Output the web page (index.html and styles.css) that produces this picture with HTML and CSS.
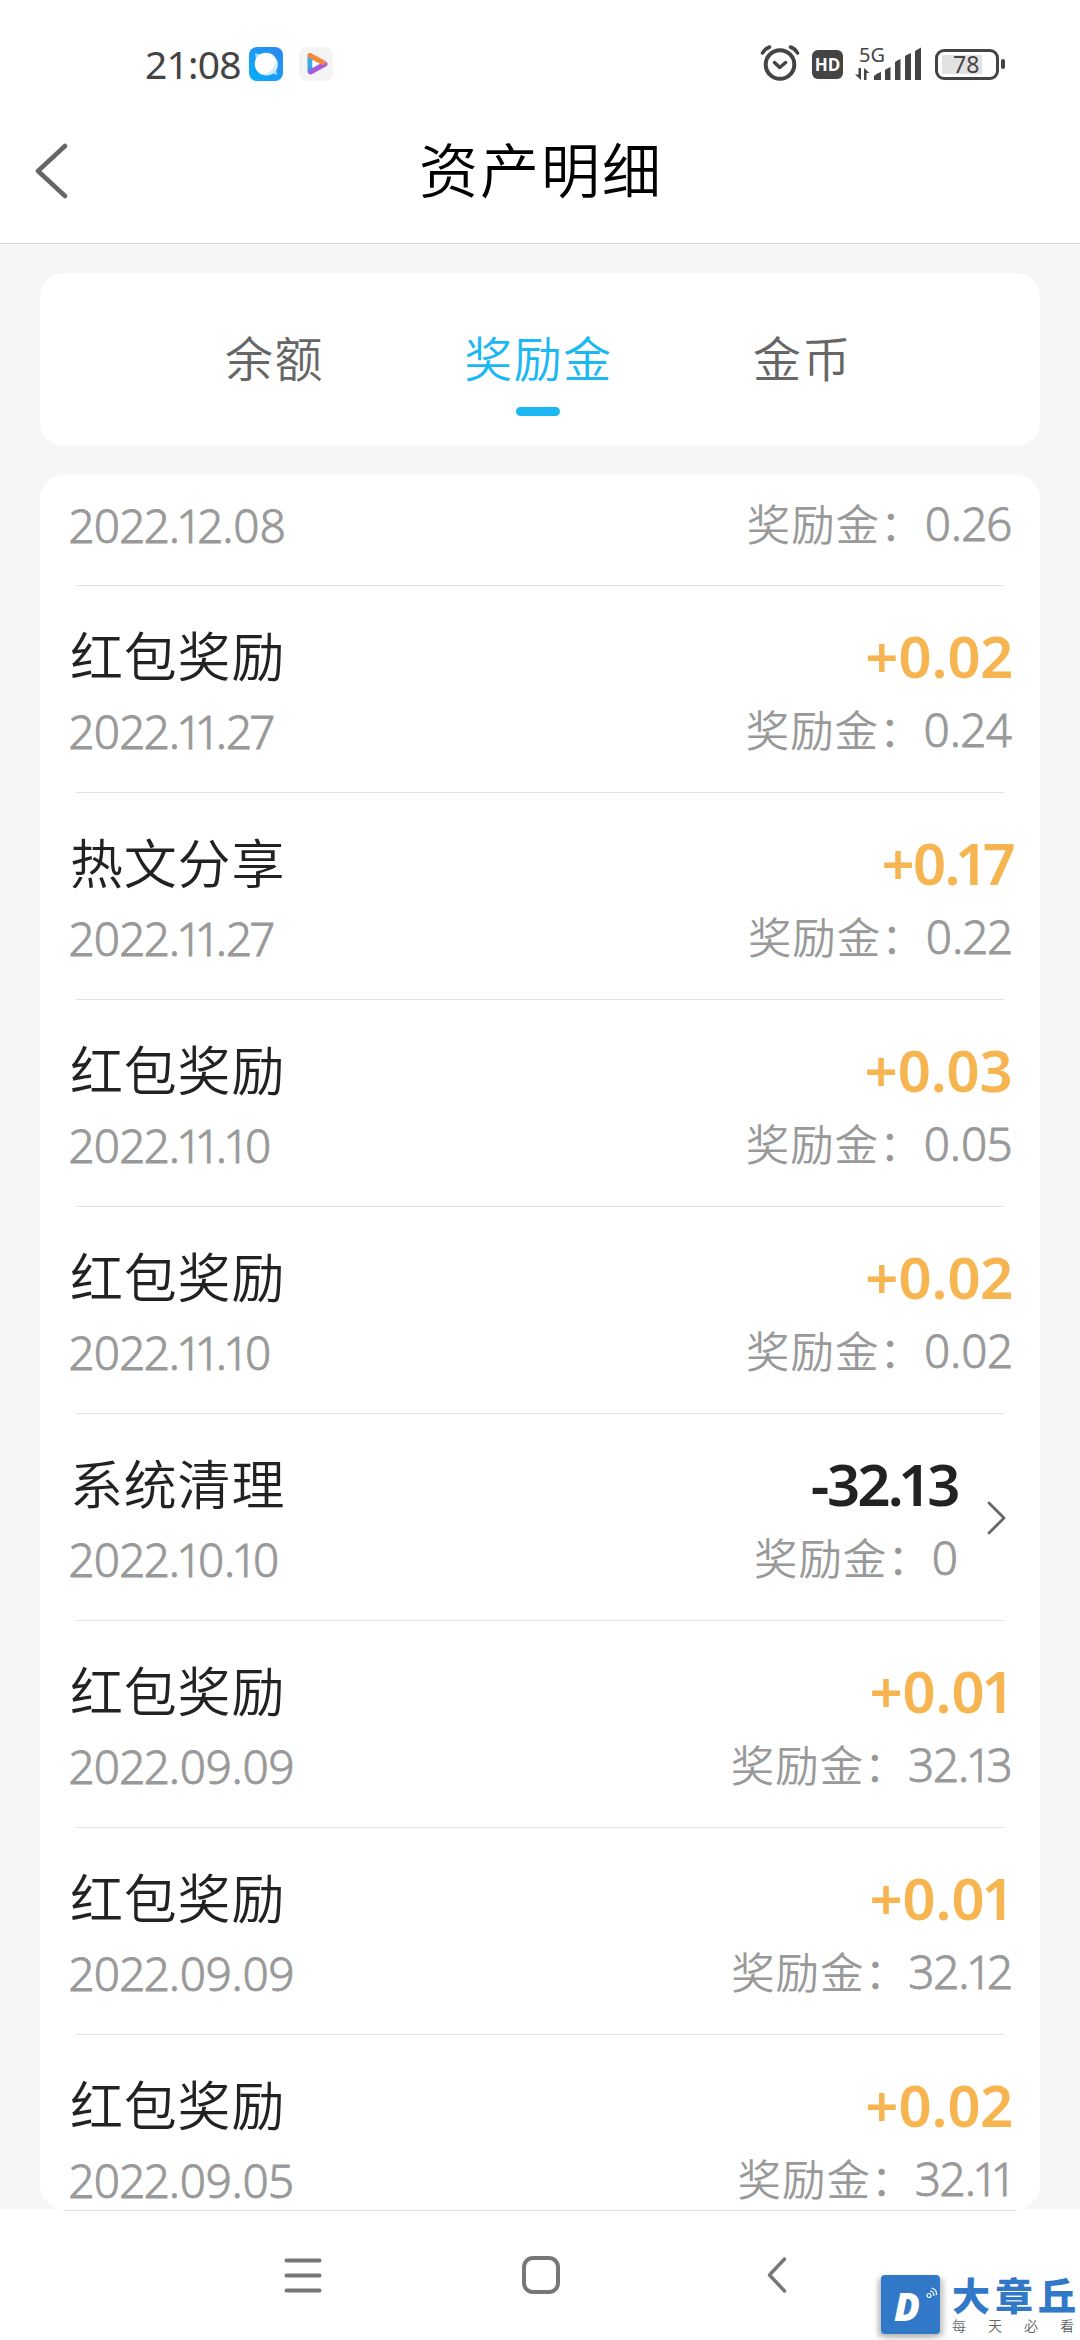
FILE: index.html
```html
<!DOCTYPE html>
<html lang="zh-CN">
<head>
<meta charset="utf-8">
<title>资产明细</title>
<link rel="stylesheet" href="styles.css">
</head>
<body>
<div class="status">
  <span class="clock">21:08</span>
  <svg class="app-a" width="34" height="34" viewBox="0 0 34 34"><defs><linearGradient id="ga" x1="1" y1="0" x2="0" y2="1"><stop offset="0" stop-color="#2f86f0"/><stop offset="1" stop-color="#06b0fb"/></linearGradient></defs><rect width="34" height="34" rx="8" fill="url(#ga)"/><circle cx="17" cy="17" r="11.3" fill="#fff"/><path d="M6 6l6 2-5 5zM28 28l-6-2 5-5z" fill="#fff" opacity=".6"/><path d="M28 13a11.3 11.3 0 0 1-15 14.500Q24 26 28 13z" fill="#d3ebff"/></svg>
  <svg class="app-b" width="34" height="34" viewBox="0 0 34 34"><rect width="34" height="34" rx="8" fill="#f4f4f5"/><path d="M11 9v15" stroke="#38a9e8" stroke-width="5" stroke-linecap="round"/><path d="M11.500 25L26 17" stroke="#a35be0" stroke-width="5" stroke-linecap="round"/><path d="M11 8.500L24 15.500" stroke="#f5863a" stroke-width="5" stroke-linecap="round"/><path d="M13.500 13.500v7l6-3.500z" fill="#fff"/></svg>
  <div class="indicators">
    <svg class="alarm" width="40" height="38" viewBox="0 0 40 38" fill="none" stroke="#444" stroke-linecap="round"><circle cx="20" cy="20.500" r="14.300" stroke-width="4"/><path d="M14.500 18.500l5.200 5 6-5" stroke-width="3.500" stroke-linejoin="round"/><path d="M2.500 9Q5 4.500 9.500 3M30.500 3Q35 4.500 37.500 9" stroke-width="3.600"/></svg>
    <span class="hd">HD</span>
    <div class="signal">
      <span class="net">5G</span>
      <svg width="66" height="36" viewBox="0 0 66 36" fill="#444"><path d="M3.500 24h2.500v12L0 30.500h3.500zM9 24l5.500 5H11.500v7H9z"/><path d="M19 32q3-3 7-4v8h-7zM30 26q3-2 5.500-3v13H30zM40 18q3-2 5.500-3v21H40zM50 12q3-2 6-3v27h-6zM60 7q3-2 6-3.500V36h-6z"/></svg>
    </div>
    <div class="battery"><span class="level">78</span></div>
    <i class="battery-tip"></i>
  </div>
</div>

<header class="bar">
  <svg class="back" width="34" height="60" viewBox="0 0 34 60"><path d="M31 5L4 30L31 55" fill="none" stroke="#666" stroke-width="4.500" stroke-linecap="round" stroke-linejoin="round"/></svg>
  <h1>资产明细</h1>
</header>

<main class="page">
  <nav class="tabs">
    <span class="tab">余额</span>
    <span class="tab active">奖励金</span>
    <span class="tab">金币</span>
  </nav>

  <section class="list">
    <div class="row partial">
      <div class="info"><span class="date">2022.12.08</span></div>
      <div class="value"><p class="total">奖励金：<b>0.26</b></p></div>
    </div>
    <div class="row">
      <div class="info"><span class="name">红包奖励</span><span class="date">2022.11.27</span></div>
      <div class="value"><span class="amount">+0.02</span><p class="total">奖励金：<b>0.24</b></p></div>
    </div>
    <div class="row">
      <div class="info"><span class="name">热文分享</span><span class="date">2022.11.27</span></div>
      <div class="value"><span class="amount narrow">+0.17</span><p class="total">奖励金：<b>0.22</b></p></div>
    </div>
    <div class="row">
      <div class="info"><span class="name">红包奖励</span><span class="date">2022.11.10</span></div>
      <div class="value"><span class="amount">+0.03</span><p class="total">奖励金：<b>0.05</b></p></div>
    </div>
    <div class="row">
      <div class="info"><span class="name">红包奖励</span><span class="date">2022.11.10</span></div>
      <div class="value"><span class="amount">+0.02</span><p class="total">奖励金：<b>0.02</b></p></div>
    </div>
    <div class="row">
      <div class="info"><span class="name">系统清理</span><span class="date">2022.10.10</span></div>
      <div class="value"><span class="amount out">-32.13</span><p class="total">奖励金：<b>0</b></p></div>
      <svg class="more" width="20" height="34" viewBox="0 0 20 34"><path d="M2 2L17 17L2 32" fill="none" stroke="#666" stroke-width="2.800" stroke-linecap="round" stroke-linejoin="round"/></svg>
    </div>
    <div class="row">
      <div class="info"><span class="name">红包奖励</span><span class="date">2022.09.09</span></div>
      <div class="value"><span class="amount">+0.01</span><p class="total">奖励金：<b>32.13</b></p></div>
    </div>
    <div class="row">
      <div class="info"><span class="name">红包奖励</span><span class="date">2022.09.09</span></div>
      <div class="value"><span class="amount">+0.01</span><p class="total">奖励金：<b>32.12</b></p></div>
    </div>
    <div class="row">
      <div class="info"><span class="name">红包奖励</span><span class="date">2022.09.05</span></div>
      <div class="value"><span class="amount">+0.02</span><p class="total">奖励金：<b>32.11</b></p></div>
    </div>
  </section>
</main>

<footer class="system-nav">
  <svg width="38" height="38" viewBox="0 0 38 38" stroke="#777" stroke-width="4" stroke-linecap="round"><path d="M2.500 4.500h33M2.500 19.500h33M2.500 34.500h33"/></svg>
  <svg class="home" width="38" height="38" viewBox="0 0 38 38"><rect x="2" y="2" width="34" height="34" rx="9" fill="none" stroke="#777" stroke-width="4"/></svg>
  <svg width="20" height="38" viewBox="0 0 20 38"><path d="M17.500 3L2.500 19L17.500 35" fill="none" stroke="#777" stroke-width="3.500" stroke-linecap="round" stroke-linejoin="round"/></svg>
</footer>

<aside class="brand">
  <div class="brand-mark"><span>D</span><svg width="12" height="12" viewBox="0 0 12 12" fill="none" stroke="#fff" stroke-width="1.200"><circle cx="3" cy="8.500" r="2"/><path d="M4 4q4 0 4 5M5.500 1q5.500 1 5 7"/></svg></div>
  <div class="brand-text"><strong>大章丘</strong><small><span>每</span><span>天</span><span>必</span><span>看</span></small></div>
</aside>
</body>
</html>
```
FILE: styles.css
```css
* { box-sizing: border-box; }
body {
  margin: 0;
  width: 1080px;
  height: 2340px;
  position: relative;
  display: flex;
  flex-direction: column;
  overflow: hidden;
  background: #fff;
  color: #222;
  font-family: "Noto Sans CJK SC", sans-serif;
  font-weight: 350;
}
p, h1 { margin: 0; }
svg { display: block; flex: none; }

.status {
  height: 100px;
  padding: 28px 75px 0 145px;
  display: flex;
  align-items: flex-start;
  color: #444;
}
.clock {
  width: 104px;
  font: 400 39px/72px "Noto Sans", sans-serif;
  letter-spacing: -.8px;
}
.app-a { margin-top: 19px; }
.app-b { margin: 19px 0 0 16px; }
.indicators { margin-left: auto; display: flex; }
.alarm { margin-top: 16px; }
.hd {
  width: 31px;
  height: 29px;
  margin: 22px 0 0 12px;
  border-radius: 6px;
  background: #444;
  color: #fff;
  font: 700 17px/30px "Open Sans", sans-serif;
  text-align: center;
}
.signal { width: 66px; margin: 16px 0 0 12px; display: grid; }
.signal > * { grid-area: 1 / 1; }
.net { margin-left: 4px; font: 400 20px/22px "Noto Sans", sans-serif; }
.battery {
  width: 64px;
  height: 31px;
  margin: 21px 0 0 14px;
  padding: 3px 4px;
  border: 3px solid #444;
  border-radius: 9px;
}
.level {
  display: block;
  width: 40px;
  height: 19px;
  padding-left: 11px;
  background: #e2e2e2;
  font: 400 23px/19px "Noto Sans", sans-serif;
}
.battery-tip { width: 4px; height: 10px; margin: 31px 0 0 2px; border-radius: 2px; background: #444; }

.bar {
  height: 144px;
  display: grid;
  grid-template-columns: 108px 1fr 108px;
  border-bottom: 1px solid #d9d9d9;
}
.back { margin: 41px 0 0 34px; }
h1 {
  padding-left: 2px;
  color: #000;
  font-size: 59px;
  font-weight: 350;
  line-height: 136px;
  letter-spacing: 2px;
  text-align: center;
}

.page {
  height: 1965px;
  padding: 29px 40px 0;
  background: #f6f6f6;
}
.tabs {
  height: 173px;
  padding: 47px 188px 0 185px;
  display: flex;
  justify-content: space-between;
  border-radius: 24px;
  background: #fff;
  color: #666;
  font-size: 48px;
  line-height: 72px;
  letter-spacing: 1.5px;
}
.tab.active { color: #1cb8f4; display: flex; flex-direction: column; align-items: center; }
.tab.active::after {
  content: "";
  width: 44px;
  height: 9px;
  margin-top: 15px;
  border-radius: 4.5px;
  background: #1cb8f4;
}

.list {
  height: 1734px;
  margin-top: 29px;
  overflow: hidden;
  border-radius: 24px;
  background: #fff;
}
.row {
  height: 207px;
  margin: 0 36px;
  padding-top: 34px;
  display: flex;
  justify-content: space-between;
  border-bottom: 1px solid #e2e2e2;
}
.row.partial { height: 111px; padding-top: 15px; }
.row:last-child { border: 0; }
.info { display: flex; flex-direction: column; margin-left: -8px; }
.name { margin: -1px 0 7px 2px; font-size: 53px; line-height: 70px; letter-spacing: .8px; }
.date {
  margin-left: 1px;
  color: #999;
  font: 300 46px/70px "Noto Sans", sans-serif;
  font-feature-settings: "pnum";
  letter-spacing: -.4px;
  -webkit-text-stroke: .8px #999;
}
.value {
  margin-left: auto;
  margin-right: -8px;
  display: flex;
  flex-direction: column;
  align-items: flex-end;
}
.amount {
  margin: 1px 0 3px;
  color: #f6b550;
  font: 600 58px/70px "Noto Sans", sans-serif;
  font-feature-settings: "pnum";
  letter-spacing: -.8px;
}
.amount.narrow { letter-spacing: -2.4px; }
.amount.out { color: #222; letter-spacing: -2.4px; }
.total { color: #999; font-size: 43.5px; line-height: 70px; letter-spacing: .9px; white-space: nowrap; }
.partial .total { margin-top: -2px; }
.total b {
  font: 300 46px/1 "Noto Sans", sans-serif;
  font-feature-settings: "pnum";
  letter-spacing: -.3px;
  -webkit-text-stroke: .8px #999;
}
.more { margin: 53px -3px 0 29px; }
.row:has(.more) .value { margin-right: 0; }

.system-nav {
  height: 131px;
  padding: 47px 293px 0 284px;
  display: flex;
  justify-content: space-between;
  align-items: flex-start;
  background: linear-gradient(#ddd, #ddd) 64px 1px / 952px 1px no-repeat #fff;
}
.home { margin-right: 8px; }

.brand {
  position: absolute;
  left: 881px;
  top: 2275px;
  display: flex;
  gap: 12px;
}
.brand-mark {
  position: relative;
  width: 59px;
  height: 59px;
  border-radius: 4px;
  background: #3278c8;
  box-shadow: -3px 3px 5px #bbb, 4px 3px 5px #ccc;
  color: #fff;
  font: italic 800 38px/63px "Open Sans", sans-serif;
  padding-left: 13px;
}
.brand-mark svg { position: absolute; right: 2px; top: 12px; }
.brand-text { width: 128px; }
.brand-text strong {
  display: block;
  margin-bottom: 3px;
  color: #3278c8;
  font-size: 38px;
  font-weight: 800;
  line-height: 38px;
  letter-spacing: 5px;
  white-space: nowrap;
}
.brand-text small {
  display: flex;
  justify-content: space-between;
  width: 122px;
  color: #666;
  font-size: 14px;
  line-height: 18px;
}
```
